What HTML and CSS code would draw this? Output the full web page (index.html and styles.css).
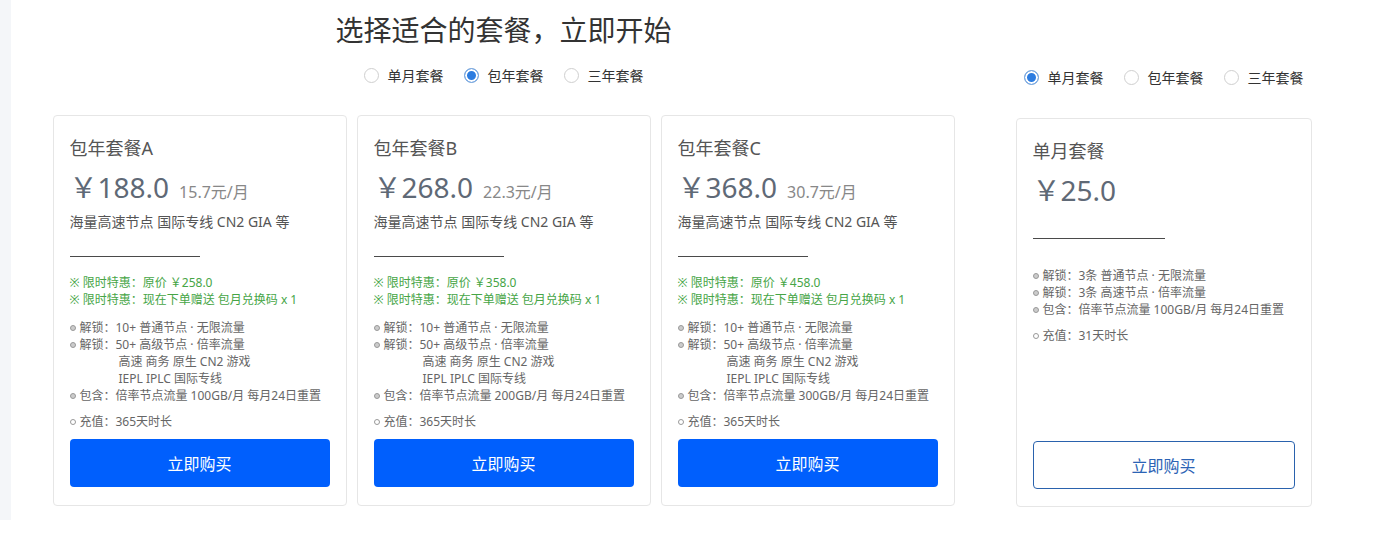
FILE: index.html
```html
<!DOCTYPE html>
<html lang="zh-CN">
<head>
  <meta charset="UTF-8">
  <meta name="viewport" content="width=device-width, initial-scale=1.0">
  <title>套餐</title>
  <link rel="stylesheet" href="styles.css">
</head>
<body>
  <div id="page">
    <div class="strip"></div>

    <div class="year-box">
      <h1 class="head">选择适合的套餐，立即开始</h1>
      <div class="radios">
        <label class="radio"><span class="dot"></span>单月套餐</label>
        <label class="radio"><span class="dot on"></span>包年套餐</label>
        <label class="radio"><span class="dot"></span>三年套餐</label>
      </div>
      <div class="cards">
        <div class="card">
          <div class="name">包年套餐A</div>
          <div class="price">￥188.0<span class="per">15.7元/月</span></div>
          <div class="desc">海量高速节点 国际专线 CN2 GIA 等</div>
          <div class="line"></div>
          <div class="promo">※ 限时特惠：原价 ￥258.0</div>
          <div class="promo">※ 限时特惠：现在下单赠送 包月兑换码 x 1</div>
          <ul class="feat">
            <li><span class="b"></span><span class="k">解锁：</span><span class="v">10+ 普通节点 · 无限流量</span></li>
            <li><span class="b"></span><span class="k">解锁：</span><span class="v">50+ 高级节点 · 倍率流量<br><span class="sub">高速 商务 原生 CN2 游戏</span><br><span class="sub">IEPL IPLC 国际专线</span></span></li>
            <li><span class="b"></span><span class="k">包含：</span><span class="v">倍率节点流量 100GB/月 每月24日重置</span></li>
          </ul>
          <div class="charge"><span class="b hollow"></span>充值：365天时长</div>
          <div class="btn">立即购买</div>
        </div>
        <div class="card">
          <div class="name">包年套餐B</div>
          <div class="price">￥268.0<span class="per">22.3元/月</span></div>
          <div class="desc">海量高速节点 国际专线 CN2 GIA 等</div>
          <div class="line"></div>
          <div class="promo">※ 限时特惠：原价 ￥358.0</div>
          <div class="promo">※ 限时特惠：现在下单赠送 包月兑换码 x 1</div>
          <ul class="feat">
            <li><span class="b"></span><span class="k">解锁：</span><span class="v">10+ 普通节点 · 无限流量</span></li>
            <li><span class="b"></span><span class="k">解锁：</span><span class="v">50+ 高级节点 · 倍率流量<br><span class="sub">高速 商务 原生 CN2 游戏</span><br><span class="sub">IEPL IPLC 国际专线</span></span></li>
            <li><span class="b"></span><span class="k">包含：</span><span class="v">倍率节点流量 200GB/月 每月24日重置</span></li>
          </ul>
          <div class="charge"><span class="b hollow"></span>充值：365天时长</div>
          <div class="btn">立即购买</div>
        </div>
        <div class="card">
          <div class="name">包年套餐C</div>
          <div class="price">￥368.0<span class="per">30.7元/月</span></div>
          <div class="desc">海量高速节点 国际专线 CN2 GIA 等</div>
          <div class="line"></div>
          <div class="promo">※ 限时特惠：原价 ￥458.0</div>
          <div class="promo">※ 限时特惠：现在下单赠送 包月兑换码 x 1</div>
          <ul class="feat">
            <li><span class="b"></span><span class="k">解锁：</span><span class="v">10+ 普通节点 · 无限流量</span></li>
            <li><span class="b"></span><span class="k">解锁：</span><span class="v">50+ 高级节点 · 倍率流量<br><span class="sub">高速 商务 原生 CN2 游戏</span><br><span class="sub">IEPL IPLC 国际专线</span></span></li>
            <li><span class="b"></span><span class="k">包含：</span><span class="v">倍率节点流量 300GB/月 每月24日重置</span></li>
          </ul>
          <div class="charge"><span class="b hollow"></span>充值：365天时长</div>
          <div class="btn">立即购买</div>
        </div>
      </div>
    </div>

    <div class="month-box">
      <div class="radios">
        <label class="radio"><span class="dot on"></span>单月套餐</label>
        <label class="radio"><span class="dot"></span>包年套餐</label>
        <label class="radio"><span class="dot"></span>三年套餐</label>
      </div>
      <div class="card tall">
        <div class="name">单月套餐</div>
        <div class="price">￥25.0</div>
        <div class="line wide"></div>
        <ul class="feat">
          <li><span class="b"></span><span class="k">解锁：</span><span class="v">3条 普通节点 · 无限流量</span></li>
          <li><span class="b"></span><span class="k">解锁：</span><span class="v">3条 高速节点 · 倍率流量</span></li>
          <li><span class="b"></span><span class="k">包含：</span><span class="v">倍率节点流量 100GB/月 每月24日重置</span></li>
        </ul>
        <div class="charge"><span class="b hollow"></span>充值：31天时长</div>
        <div class="btn ghost">立即购买</div>
      </div>
    </div>
  </div>
</body>
</html>
```

FILE: styles.css
```css
*{
  margin: 0px;
  padding: 0px;
  box-sizing: border-box;
}
body{
  background-color: #fff;
  font-family: "Noto Sans", "Noto Sans CJK SC", sans-serif;
  color: #555;
}
#page{
  display: flex;
  align-items: flex-start;
}
.strip{
  width: 11px;
  height: 520px;
  background-color: #f4f6f9;
}
.year-box{
  width: 985px;
  display: flex;
  flex-direction: column;
  align-items: center;
}
.head{
  margin-top: 10px;
  font-size: 28px;
  font-weight: 400;
  line-height: 40px;
  color: #333;
}
.radios{
  display: flex;
  gap: 20px;
  height: 20px;
  margin-top: 15px;
}
.radio{
  display: flex;
  align-items: center;
  gap: 9px;
  font-size: 14px;
  color: #333;
}
.dot{
  width: 15px;
  height: 15px;
  border-radius: 50%;
  border: 1px solid #cfcfcf;
  background-color: #fff;
}
.dot.on{
  border-color: #7ea9dc;
  background-color: #2c7ce0;
  box-shadow: inset 0 0 0 2px #fff;
}
.cards{
  display: flex;
  gap: 10px;
  margin-top: 30px;
}
.card{
  width: 294px;
  border: 1px solid #e6e6e6;
  border-radius: 4px;
  padding: 20px 16px 18px;
  display: flex;
  flex-direction: column;
}
.name{
  font-size: 18px;
  line-height: 24px;
  color: #555;
}
.price{
  margin-top: 9px;
  font-size: 28px;
  line-height: 36px;
  color: #5f6976;
}
.per{
  margin-left: 10px;
  font-size: 16px;
  color: #888;
}
.desc{
  margin-top: 2px;
  font-size: 14px;
  line-height: 20px;
  color: #555;
}
.line{
  width: 130px;
  height: 1px;
  margin-top: 24px;
  background-color: #4a4a4a;
}
.line.wide{
  width: 132px;
  margin-top: 30px;
}
.promo{
  font-size: 12px;
  line-height: 17px;
  color: #46a546;
}
.line + .promo{
  margin-top: 17px;
}
.feat{
  list-style: none;
  margin-top: 11px;
  font-size: 12px;
  line-height: 17px;
  color: #666;
}
.line + .feat{
  margin-top: 28px;
}
.feat li{
  display: flex;
  align-items: flex-start;
}
.b{
  width: 6px;
  height: 6px;
  margin: 6px 4px 0 0;
  flex-shrink: 0;
  border-radius: 50%;
  border: 1px solid #999;
  background-color: #ccc;
}
.b.hollow{
  background-color: #fff;
  display: inline-block;
  margin: 0 4px 1px 0;
}
.k{
  width: 36px;
  flex-shrink: 0;
}
.sub{
  padding-left: 3px;
}
.charge{
  margin-top: 9px;
  font-size: 12px;
  line-height: 17px;
  color: #666;
}
.btn{
  margin-top: 9px;
  height: 48px;
  border-radius: 4px;
  background-color: #005ffd;
  color: #fff;
  font-size: 16px;
  display: flex;
  align-items: center;
  justify-content: center;
}
.month-box{
  width: 335px;
  padding-top: 67px;
  display: flex;
  flex-direction: column;
  align-items: center;
}
.month-box .radios{
  margin-top: 0px;
}
.card.tall{
  margin-top: 31px;
  width: 296px;
  height: 389px;
  padding-bottom: 17px;
}
.btn.ghost{
  margin-top: auto;
  background-color: #fff;
  border: 1px solid #2a62ad;
  color: #2b63b5;
}
```
